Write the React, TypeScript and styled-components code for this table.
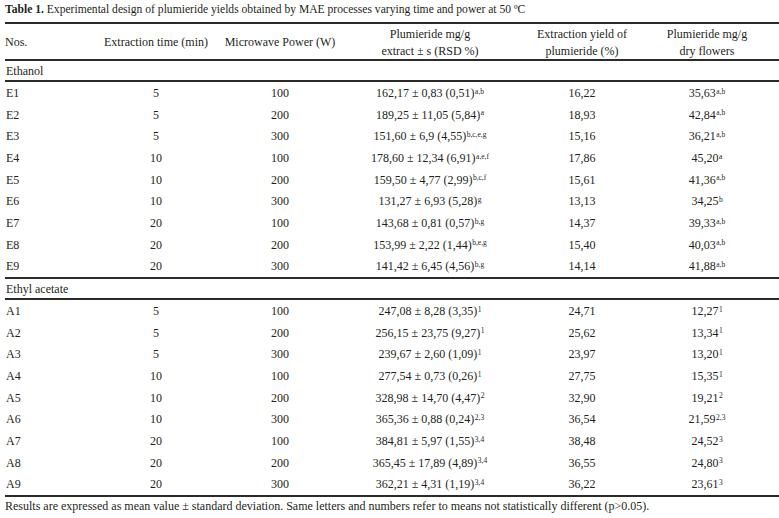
import styled, { createGlobalStyle } from "styled-components";

const GlobalStyle = createGlobalStyle`
  html, body {
    margin: 0;
    padding: 0;
    background: #ffffff;
  }
  body {
    font-family: "Liberation Serif", "Times New Roman", serif;
    color: #231f20;
  }
`;

interface rowType {
  nos: string;
  time: number;
  power: number;
  extract: string;
  extractSup: string;
  yieldPct: string;
  dry: string;
  drySup: string;
}

const ethanolRows: rowType[] = [
  { nos: "E1", time: 5, power: 100, extract: "162,17 ± 0,83 (0,51)", extractSup: "a,b", yieldPct: "16,22", dry: "35,63", drySup: "a,b" },
  { nos: "E2", time: 5, power: 200, extract: "189,25 ± 11,05 (5,84)", extractSup: "a", yieldPct: "18,93", dry: "42,84", drySup: "a,b" },
  { nos: "E3", time: 5, power: 300, extract: "151,60 ± 6,9 (4,55)", extractSup: "b,c,e,g", yieldPct: "15,16", dry: "36,21", drySup: "a,b" },
  { nos: "E4", time: 10, power: 100, extract: "178,60 ± 12,34 (6,91)", extractSup: "a,e,f", yieldPct: "17,86", dry: "45,20", drySup: "a" },
  { nos: "E5", time: 10, power: 200, extract: "159,50 ± 4,77 (2,99)", extractSup: "b,c,f", yieldPct: "15,61", dry: "41,36", drySup: "a,b" },
  { nos: "E6", time: 10, power: 300, extract: "131,27 ± 6,93 (5,28)", extractSup: "g", yieldPct: "13,13", dry: "34,25", drySup: "b" },
  { nos: "E7", time: 20, power: 100, extract: "143,68 ± 0,81 (0,57)", extractSup: "b,g", yieldPct: "14,37", dry: "39,33", drySup: "a,b" },
  { nos: "E8", time: 20, power: 200, extract: "153,99 ± 2,22 (1,44)", extractSup: "b,e,g", yieldPct: "15,40", dry: "40,03", drySup: "a,b" },
  { nos: "E9", time: 20, power: 300, extract: "141,42 ± 6,45 (4,56)", extractSup: "b,g", yieldPct: "14,14", dry: "41,88", drySup: "a,b" },
];

const acetateRows: rowType[] = [
  { nos: "A1", time: 5, power: 100, extract: "247,08 ± 8,28 (3,35)", extractSup: "1", yieldPct: "24,71", dry: "12,27", drySup: "1" },
  { nos: "A2", time: 5, power: 200, extract: "256,15 ± 23,75 (9,27)", extractSup: "1", yieldPct: "25,62", dry: "13,34", drySup: "1" },
  { nos: "A3", time: 5, power: 300, extract: "239,67 ± 2,60 (1,09)", extractSup: "1", yieldPct: "23,97", dry: "13,20", drySup: "1" },
  { nos: "A4", time: 10, power: 100, extract: "277,54 ± 0,73 (0,26)", extractSup: "1", yieldPct: "27,75", dry: "15,35", drySup: "1" },
  { nos: "A5", time: 10, power: 200, extract: "328,98 ± 14,70 (4,47)", extractSup: "2", yieldPct: "32,90", dry: "19,21", drySup: "2" },
  { nos: "A6", time: 10, power: 300, extract: "365,36 ± 0,88 (0,24)", extractSup: "2,3", yieldPct: "36,54", dry: "21,59", drySup: "2,3" },
  { nos: "A7", time: 20, power: 100, extract: "384,81 ± 5,97 (1,55)", extractSup: "3,4", yieldPct: "38,48", dry: "24,52", drySup: "3" },
  { nos: "A8", time: 20, power: 200, extract: "365,45 ± 17,89 (4,89)", extractSup: "3,4", yieldPct: "36,55", dry: "24,80", drySup: "3" },
  { nos: "A9", time: 20, power: 300, extract: "362,21 ± 4,31 (1,19)", extractSup: "3,4", yieldPct: "36,22", dry: "23,61", drySup: "3" },
];

const colWidths = [89, 124, 124, 176, 128, 133];

const DataRows = ({ rows }: { rows: rowType[] }) => (
  <>
    {rows.map((r) => (
      <tr key={r.nos}>
        <Cell $align="left">{r.nos}</Cell>
        <Cell>{r.time}</Cell>
        <Cell>{r.power}</Cell>
        <Cell>
          {r.extract}
          <Sup>{r.extractSup}</Sup>
        </Cell>
        <Cell>{r.yieldPct}</Cell>
        <Cell $last>
          {r.dry}
          <Sup>{r.drySup}</Sup>
        </Cell>
      </tr>
    ))}
  </>
);

const App = () => {
  return (
    <Page>
      <GlobalStyle />
      <Title>
        <b>Table 1.</b> Experimental design of plumieride yields obtained by MAE
        processes varying time and power at 50 ºC
      </Title>
      <Table>
        <colgroup>
          {colWidths.map((w, i) => (
            <col key={i} style={{ width: w }} />
          ))}
        </colgroup>
        <thead>
          <tr>
            <HeadCell $align="left">Nos.</HeadCell>
            <HeadCell>Extraction time (min)</HeadCell>
            <HeadCell>Microwave Power (W)</HeadCell>
            <HeadCell>
              Plumieride mg/g
              <br />
              extract ± s (RSD %)
            </HeadCell>
            <HeadCell>
              Extraction yield of
              <br />
              plumieride (%)
            </HeadCell>
            <HeadCell $last>
              Plumieride mg/g
              <br />
              dry flowers
            </HeadCell>
          </tr>
        </thead>
        <tbody>
          <tr>
            <SectionCell colSpan={6}>Ethanol</SectionCell>
          </tr>
          <DataRows rows={ethanolRows} />
          <tr>
            <SectionCell colSpan={6}>Ethyl acetate</SectionCell>
          </tr>
          <DataRows rows={acetateRows} />
        </tbody>
      </Table>
      <Note>
        Results are expressed as mean value ± standard deviation. Same letters
        and numbers refer to means not statistically different (p&gt;0.05).
      </Note>
    </Page>
  );
};

export default App;

const Page = styled.div`
  width: 774px;
  padding-left: 5px;
  font-size: 12px;
`;

const Title = styled.div`
  font-size: 11.6px;
  line-height: 20px;
  height: 20px;
  margin-bottom: 2px;
  white-space: nowrap;
  b {
    font-weight: bold;
  }
`;

const Table = styled.table`
  width: 774px;
  table-layout: fixed;
  border-collapse: separate;
  border-spacing: 0;
  border-top: 2px solid #2b2b2b;
  font-size: 12px;
`;

const HeadCell = styled.th<{ $align?: string; $last?: boolean }>`
  font-weight: normal;
  text-align: ${(p) => p.$align || "center"};
  vertical-align: middle;
  line-height: 16.5px;
  height: 35px;
  padding: 2px ${(p) => (p.$last ? "11px" : "0")} 0 0;
  box-sizing: border-box;
  white-space: nowrap;
`;

const SectionCell = styled.td`
  text-align: left;
  line-height: 17px;
  padding: 2px 0 0 1px;
  height: 17px;
  box-sizing: content-box;
  border-top: 2px solid #2b2b2b;
  border-bottom: 2px solid #2b2b2b;
  white-space: nowrap;
`;

const Cell = styled.td<{ $align?: string; $last?: boolean }>`
  text-align: ${(p) => p.$align || "center"};
  line-height: 20.67px;
  padding: 1px ${(p) => (p.$last ? "11px" : "0")} 0 ${(p) => (p.$align === "left" ? "1px" : "0")};
  white-space: nowrap;
`;

const Sup = styled.span`
  font-size: 7.5px;
  line-height: 0;
  vertical-align: 3.5px;
  margin-left: 0.5px;
`;

const Note = styled.div`
  border-top: 2px solid #2b2b2b;
  padding-top: 2px;
  line-height: 14px;
  white-space: nowrap;
`;
